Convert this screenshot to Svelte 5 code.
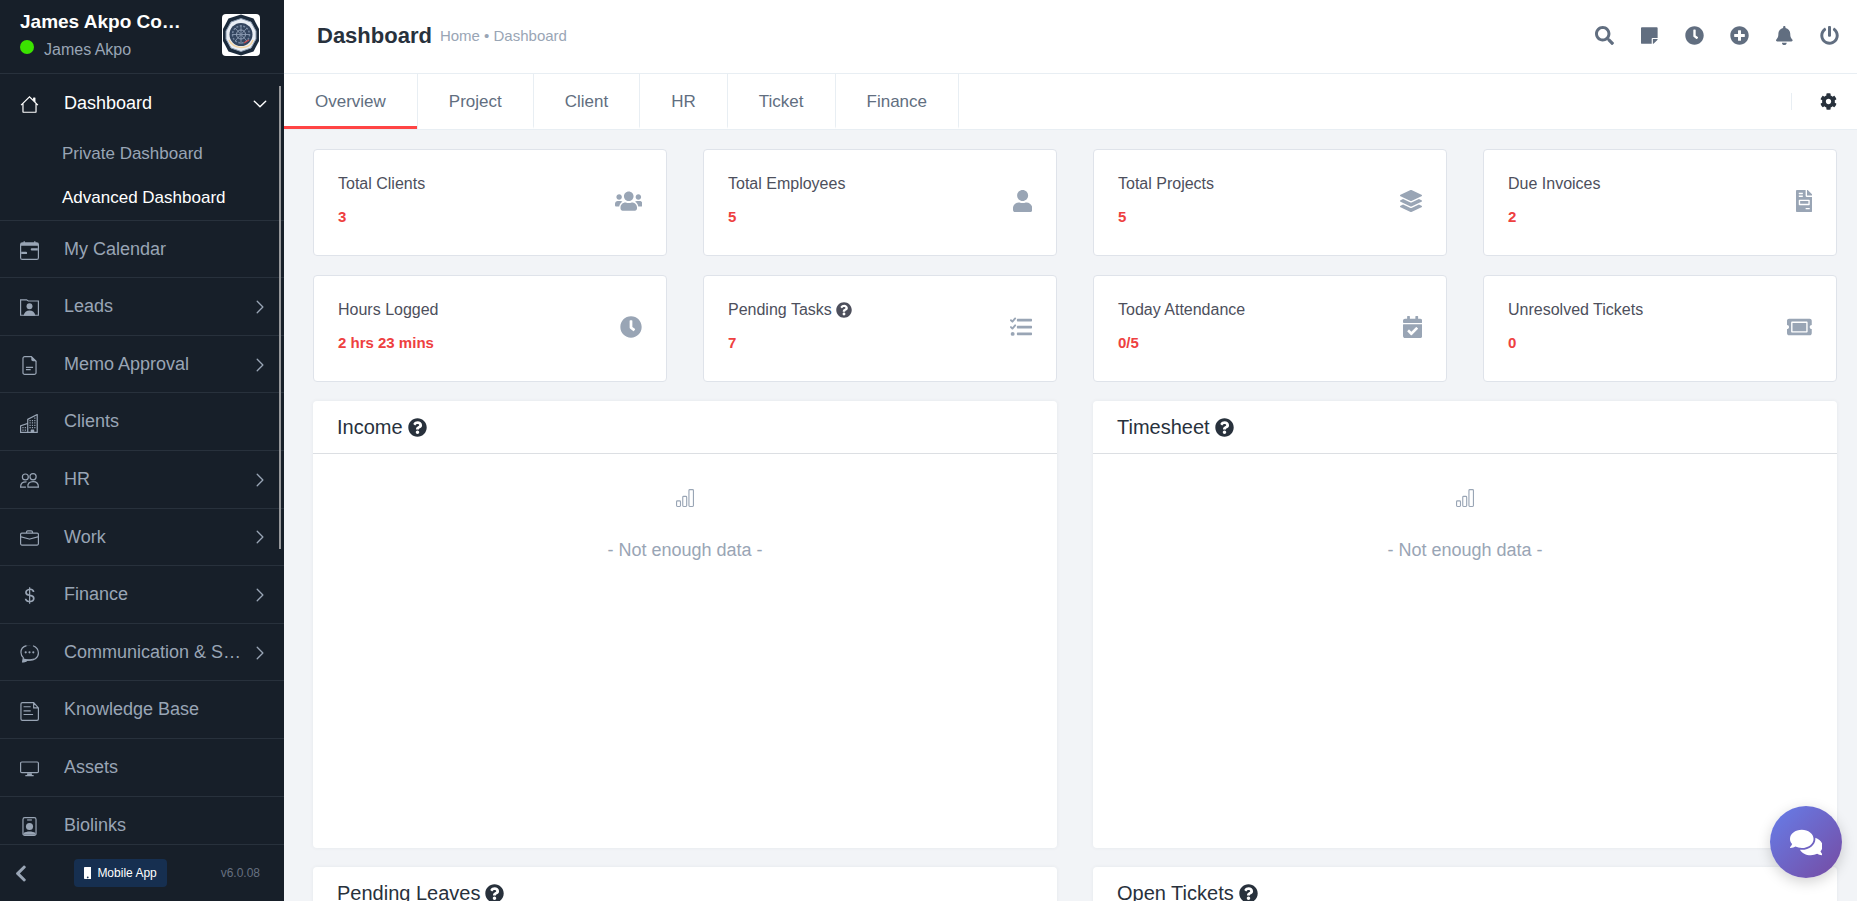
<script>
  const icons = {
    house: { box: '0 0 16 16', body: '<path fill="none" stroke="currentColor" d="M2.5 7v7a.5.5 0 0 0 .5.5h10a.5.5 0 0 0 .5-.5V7M.9 8.5L8 1.5l7.1 7"/><path d="M13 2.500V6l-2-2V2.500a.5.5 0 0 1 .5-.5h1a.5.5 0 0 1 .5.5z"/>' },
    calendar: { box: '0 0 16 16', body: '<path d="M9 7a1 1 0 0 1 1-1h5v2h-5a1 1 0 0 1-1-1zM1 9h4a1 1 0 0 1 0 2H1V9z"/><path d="M3.5 0a.5.5 0 0 1 .5.5V1h8V.5a.5.5 0 0 1 1 0V1h1a2 2 0 0 1 2 2v11a2 2 0 0 1-2 2H2a2 2 0 0 1-2-2V3a2 2 0 0 1 2-2h1V.5a.5.5 0 0 1 .5-.5zM1 4v10a1 1 0 0 0 1 1h12a1 1 0 0 0 1-1V4H1z"/>' },
    leads: { box: '0 0 16 16', body: '<path fill="none" stroke="currentColor" d="M.5 14.500v-13h5L7 2.500h8.500v12z"/><circle cx="8" cy="7" r="2.500"/><path d="M3 15c.5-3 2.500-4.500 5-4.500s4.500 1.500 5 4.500z"/>' },
    memo: { box: '0 0 16 16', body: '<path fill="none" stroke="currentColor" d="M9.500.5H4A1.500 1.500 0 0 0 2.500 2v12A1.500 1.500 0 0 0 4 15.500h8a1.500 1.500 0 0 0 1.500-1.500V4.500zM5 9.500h6M5 11.500h4"/><path d="M9.500 0v3A1.500 1.500 0 0 0 11 4.500h3z"/>' },
    buildings: { box: '0 0 16 16', body: '<path d="M14.763.075A.5.5 0 0 1 15 .5v15a.5.5 0 0 1-.5.5h-14a.5.5 0 0 1-.5-.5V10a.5.5 0 0 1 .342-.474L6 7.640V4.500a.5.5 0 0 1 .276-.447l8-4a.5.5 0 0 1 .487.022zM6 8.694 1 10.360V15h5V8.694zM7 15h2v-1.500a.5.5 0 0 1 .5-.5h2a.5.5 0 0 1 .5.5V15h2V1.309l-7 3.500V15z"/><path d="M2 11h1v1H2v-1zm2 0h1v1H4v-1zm-2 2h1v1H2v-1zm2 0h1v1H4v-1zm4-4h1v1H8V9zm2 0h1v1h-1V9zm-2 2h1v1H8v-1zm2 0h1v1h-1v-1zm2-2h1v1h-1V9zm0 2h1v1h-1v-1zM8 7h1v1H8V7zm2 0h1v1h-1V7zm2 0h1v1h-1V7zM8 5h1v1H8V5zm2 0h1v1h-1V5zm2 0h1v1h-1V5zm0-2h1v1h-1V3z"/>' },
    people: { box: '0 0 16 16', body: '<g fill="none" stroke="currentColor"><circle cx="4.500" cy="5" r="2.500"/><circle cx="11" cy="4.800" r="2.600"/><path d="M6.700 13.500c-.6-3 1.300-4.500 4.300-4.500s4.500 1.500 4.500 4.500zM5 13.500H.5C.5 10.500 2 9 5.500 9.100"/></g>' },
    briefcase: { box: '0 0 16 16', body: '<path d="M6.500 1A1.500 1.500 0 0 0 5 2.500V3H1.500A1.500 1.500 0 0 0 0 4.500v8A1.500 1.500 0 0 0 1.500 14h13a1.500 1.500 0 0 0 1.500-1.500v-8A1.500 1.500 0 0 0 14.500 3H11v-.5A1.500 1.500 0 0 0 9.500 1h-3zm0 1h3a.5.5 0 0 1 .5.5V3H6v-.5a.5.5 0 0 1 .5-.5zm1.886 6.914L15 7.151V12.500a.5.5 0 0 1-.5.5h-13a.5.5 0 0 1-.5-.5V7.150l6.614 1.764a1.500 1.500 0 0 0 .772 0zM1.500 4h13a.5.5 0 0 1 .5.5v1.616L8.129 7.948a.5.5 0 0 1-.258 0L1 6.116V4.500a.5.5 0 0 1 .5-.5z"/>' },
    dollar: { box: '0 0 16 16', body: '<path d="M4 10.781c.148 1.667 1.513 2.850 3.591 3.003V15h1.043v-1.216c2.270-.179 3.678-1.438 3.678-3.300 0-1.590-.947-2.510-2.956-3.028l-.722-.187V3.467c1.122.110 1.879.714 2.070 1.616h1.470c-.166-1.600-1.540-2.748-3.540-2.875V1H7.591v1.233c-1.939.230-3.270 1.472-3.270 3.156 0 1.454.966 2.483 2.661 2.917l.610.162v4.031c-1.149-.170-1.940-.800-2.131-1.718H4zm3.391-3.836c-1.043-.263-1.600-.825-1.600-1.616 0-.944.704-1.641 1.800-1.828v3.495l-.200-.050zm1.591 1.872c1.287.323 1.852.859 1.852 1.769 0 1.097-.826 1.828-2.200 1.939V8.730l.348.086z"/>' },
    chat: { box: '0 0 16 16', body: '<path fill="none" stroke="currentColor" d="M5.500 1.400C2.500 2.200.8 4.200.8 7c0 1.900.8 3.500 2 4.500L2.200 15c2 0 3.200-.9 4-1.500 5.500.9 9.300-2 9.300-6 0-3-2-5-4.500-6"/><path d="M2.200 15.300l.6-3.600c2.500 1.700 6.500 1.500 9 .3-1.500 1.800-3.800 2.200-5.500 2-1.200 1-2.500 1.400-4.100 1.300zM5.500 1.900C7 .8 9.500.8 11 1.300 9 .9 7.500 1.200 5.500 1.900z"/><circle cx="4.800" cy="7" r=".9"/><circle cx="8" cy="7" r=".9"/><circle cx="11.200" cy="7" r=".9"/>' },
    book: { box: '0 0 16 16', body: '<path fill="none" stroke="currentColor" d="M11.500.5H2A1.200 1.200 0 0 0 .8 1.700v12.600A1.200 1.200 0 0 0 2 15.500h12.300a1.200 1.200 0 0 0 1.200-1.200V5zM11.500.5V5h4M3 4h6M3 7.500h6M3 10.500h8"/>' },
    monitor: { box: '0 0 16 16', body: '<path fill="none" stroke="currentColor" d="M1.500 2.500h13a1 1 0 0 1 1 1v7a1 1 0 0 1-1 1h-13a1 1 0 0 1-1-1v-7a1 1 0 0 1 1-1z"/><path d="M6 12h4v1.500h1.500v1h-7v-1H6z"/>' },
    badge: { box: '0 0 16 16', body: '<path fill="none" stroke="currentColor" d="M4 .5h8A1.500 1.500 0 0 1 13.500 2v12a1.500 1.500 0 0 1-1.500 1.500H4A1.500 1.500 0 0 1 2.500 14V2A1.500 1.500 0 0 1 4 .5z"/><path d="M6 2h4v1H6z"/><circle cx="8" cy="8" r="3"/><path d="M3 15v-1.500c2.500-1.700 7.500-1.700 10 0V15z"/>' },
    down: { box: '0 0 16 16', body: '<path fill="none" stroke="currentColor" stroke-width="1.600" stroke-linecap="round" stroke-linejoin="round" d="M1.500 4.800l6.500 6.400 6.500-6.400"/>' },
    right: { box: '0 0 16 16', body: '<path fill="none" stroke="currentColor" stroke-width="1.500" stroke-linecap="round" stroke-linejoin="round" d="M4.800 1.500l6.500 6.500-6.500 6.500"/>' },
    left: { box: '0 0 320 512', body: '<path d="M34.520 239.030L228.870 44.690c9.370-9.370 24.570-9.370 33.940 0l22.670 22.670c9.360 9.360 9.370 24.520.040 33.900L131.490 256l154.020 154.750c9.340 9.380 9.320 24.540-.040 33.900l-22.670 22.670c-9.370 9.370-24.570 9.370-33.940 0L34.520 272.970c-9.370-9.370-9.370-24.570 0-33.940z"/>' },
    mobile: { box: '0 0 320 512', body: '<path fill-rule="evenodd" d="M32 0h256a32 32 0 0 1 32 32v448a32 32 0 0 1-32 32H32a32 32 0 0 1-32-32V32A32 32 0 0 1 32 0zm128 410a34 34 0 1 0 .1 0z"/>' },
    search: { box: '0 0 512 512', body: '<path d="M505 442.700L405.300 343c-4.500-4.500-10.600-7-17-7H372c27.600-35.300 44-79.700 44-128C416 93.100 322.900 0 208 0S0 93.100 0 208s93.100 208 208 208c48.300 0 92.700-16.400 128-44v16.300c0 6.400 2.500 12.500 7 17l99.700 99.700c9.400 9.400 24.600 9.400 33.900 0l28.300-28.300c9.400-9.400 9.400-24.600.1-34zM208 336c-70.700 0-128-57.200-128-128 0-70.700 57.200-128 128-128 70.700 0 128 57.200 128 128 0 70.700-57.200 128-128 128z"/>' },
    note: { box: '0 0 448 512', body: '<path d="M312 320h136V56c0-13.300-10.700-24-24-24H24C10.700 32 0 42.700 0 56v400c0 13.300 10.700 24 24 24h264V344c0-13.200 10.800-24 24-24zm129 55l-98 98c-4.500 4.500-10.600 7-17 7h-6V352h128v6.100c0 6.300-2.500 12.400-7 16.900z"/>' },
    clock: { box: '0 0 512 512', body: '<path d="M256,8C119,8,8,119,8,256S119,504,256,504,504,393,504,256,393,8,256,8Zm92.490,313h0l-20,25a16,16,0,0,1-22.490,2.500h0l-67-49.720a40,40,0,0,1-15-31.230V112a16,16,0,0,1,16-16h32a16,16,0,0,1,16,16V256l58,42.500A16,16,0,0,1,348.490,321Z"/>' },
    plus: { box: '0 0 512 512', body: '<path d="M256 8C119 8 8 119 8 256s111 248 248 248 248-111 248-248S393 8 256 8zm144 276c0 6.600-5.400 12-12 12h-92v92c0 6.600-5.400 12-12 12h-56c-6.600 0-12-5.400-12-12v-92h-92c-6.600 0-12-5.400-12-12v-56c0-6.600 5.400-12 12-12h92v-92c0-6.600 5.400-12 12-12h56c6.600 0 12 5.400 12 12v92h92c6.600 0 12 5.400 12 12v56z"/>' },
    bell: { box: '0 0 448 512', body: '<path d="M224 512c35.320 0 63.970-28.650 63.970-64H160.030c0 35.350 28.650 64 63.970 64zm215.390-149.710c-19.320-20.760-55.470-51.990-55.470-154.290 0-77.700-54.480-139.900-127.940-155.160V32c0-17.670-14.320-32-31.980-32s-31.980 14.330-31.980 32v20.840C118.560 68.100 64.080 130.300 64.080 208c0 102.300-36.150 133.530-55.470 154.290-6 6.450-8.660 14.160-8.610 21.710.110 16.400 12.980 32 32.100 32h383.800c19.120 0 32-15.600 32.100-32 .050-7.550-2.610-15.270-8.610-21.710z"/>' },
    power: { box: '0 0 512 512', body: '<path d="M400 54.100c63 45 104 118.600 104 201.900 0 136.800-110.800 247.700-247.500 248C120 504.300 8.200 393 8 256.400 7.900 173.100 48.900 99.300 111.800 54.200c11.700-8.300 28-4.800 35 7.700L162.600 90c5.900 10.500 3.100 23.800-6.600 31-41.500 30.800-68 79.600-68 134.900-.1 92.300 74.500 168.100 168 168.100 91.600 0 168.600-74.200 168-169.100-.3-51.800-24.700-101.800-68.100-134-9.700-7.200-12.400-20.500-6.500-30.900l15.800-28.100c7-12.400 23.200-16.100 34.800-7.800zM296 264V24c0-13.300-10.700-24-24-24h-32c-13.300 0-24 10.700-24 24v240c0 13.300 10.700 24 24 24h32c13.300 0 24-10.700 24-24z"/>' },
    cog: { box: '0 0 512 512', body: '<path d="M487.400 315.700l-42.600-24.600c4.300-23.200 4.300-47 0-70.200l42.600-24.600c4.900-2.800 7.100-8.600 5.500-14-11.100-35.600-30-67.800-54.700-94.600-3.800-4.100-10-5.100-14.800-2.300L380.800 110c-17.900-15.400-38.500-27.300-60.800-35.100V25.800c0-5.600-3.900-10.500-9.400-11.700-36.700-8.200-74.300-7.800-109.200 0-5.500 1.200-9.400 6.100-9.400 11.700V75c-22.200 7.900-42.800 19.800-60.800 35.100L88.700 85.500c-4.900-2.800-11-1.900-14.800 2.300-24.700 26.700-43.600 58.900-54.700 94.600-1.700 5.400.6 11.200 5.500 14L67.300 221c-4.300 23.200-4.300 47 0 70.200l-42.600 24.600c-4.900 2.800-7.100 8.600-5.500 14 11.100 35.600 30 67.800 54.700 94.600 3.800 4.100 10 5.100 14.800 2.300l42.600-24.600c17.900 15.400 38.500 27.300 60.800 35.100v49.200c0 5.600 3.900 10.500 9.400 11.700 36.700 8.200 74.300 7.800 109.200 0 5.500-1.200 9.400-6.100 9.400-11.700v-49.200c22.200-7.900 42.800-19.800 60.800-35.100l42.600 24.600c4.900 2.800 11 1.900 14.800-2.300 24.700-26.700 43.600-58.900 54.700-94.600 1.500-5.500-.7-11.300-5.600-14.100zM256 336c-44.100 0-80-35.900-80-80s35.900-80 80-80 80 35.900 80 80-35.900 80-80 80z"/>' },
    users: { box: '0 0 640 512', body: '<path d="M96 224c35.300 0 64-28.700 64-64s-28.700-64-64-64-64 28.700-64 64 28.700 64 64 64zm448 0c35.300 0 64-28.700 64-64s-28.700-64-64-64-64 28.700-64 64 28.700 64 64 64zm32 32h-64c-17.600 0-33.500 7.100-45.100 18.600 40.300 22.100 68.900 62 75.100 109.400h66c17.700 0 32-14.300 32-32v-32c0-35.300-28.700-64-64-64zm-256 0c61.900 0 112-50.100 112-112S381.900 32 320 32 208 82.100 208 144s50.100 112 112 112zm76.800 32h-8.300c-20.800 10-43.900 16-68.500 16s-47.600-6-68.500-16h-8.300C179.600 288 128 339.600 128 403.200V432c0 26.500 21.500 48 48 48h288c26.500 0 48-21.500 48-48v-28.800c0-63.600-51.600-115.200-115.200-115.200zm-223.700-13.400C161.500 263.100 145.600 256 128 256H64c-35.300 0-64 28.700-64 64v32c0 17.700 14.300 32 32 32h65.900c6.300-47.400 34.900-87.300 75.200-109.400z"/>' },
    user: { box: '0 0 448 512', body: '<path d="M224 256c70.700 0 128-57.300 128-128S294.700 0 224 0 96 57.300 96 128s57.300 128 128 128zm89.600 32h-16.700c-22.200 10.200-46.900 16-72.900 16s-50.600-5.800-72.900-16h-16.700C60.200 288 0 348.200 0 422.400V464c0 26.500 21.500 48 48 48h352c26.500 0 48-21.500 48-48v-41.600c0-74.200-60.200-134.400-134.400-134.400z"/>' },
    layers: { box: '0 0 512 512', body: '<path d="M12.410 148.020l232.940 105.670c6.800 3.090 14.490 3.090 21.290 0l232.940-105.670c16.550-7.510 16.550-32.520 0-40.030L266.650 2.310a25.607 25.607 0 0 0-21.290 0L12.410 107.980c-16.550 7.510-16.550 32.530 0 40.040zm487.180 88.280l-58.090-26.330-161.640 73.270c-7.560 3.430-15.590 5.170-23.860 5.170s-16.290-1.740-23.860-5.170L70.510 209.970l-58.100 26.330c-16.550 7.500-16.550 32.500 0 40l232.940 105.590c6.800 3.080 14.490 3.080 21.290 0L499.590 276.300c16.550-7.500 16.550-32.500 0-40zm0 127.800l-57.870-26.230-161.860 73.370c-7.560 3.430-15.590 5.170-23.860 5.170s-16.290-1.740-23.860-5.170L70.290 337.870 12.410 364.100c-16.550 7.500-16.550 32.500 0 40l232.940 105.590c6.800 3.080 14.490 3.080 21.290 0L499.590 404.100c16.550-7.500 16.550-32.500 0-40z"/>' },
    invoice: { box: '0 0 384 512', body: '<path d="M288 256H96v64h192v-64zm89-151L279.100 7c-4.500-4.500-10.600-7-17-7H256v128h128v-6.100c0-6.300-2.500-12.400-7-16.900zm-153 31V0H24C10.700 0 0 10.700 0 24v464c0 13.300 10.700 24 24 24h336c13.300 0 24-10.700 24-24V160H248c-13.200 0-24-10.800-24-24zM64 72c0-4.420 3.580-8 8-8h80c4.420 0 8 3.580 8 8v16c0 4.420-3.580 8-8 8H72c-4.420 0-8-3.580-8-8V72zm0 64c0-4.420 3.580-8 8-8h80c4.420 0 8 3.580 8 8v16c0 4.420-3.580 8-8 8H72c-4.420 0-8-3.580-8-8v-16zm256 304c0 4.420-3.580 8-8 8h-80c-4.420 0-8-3.580-8-8v-16c0-4.420 3.580-8 8-8h80c4.420 0 8 3.580 8 8v16zm0-200v96c0 8.840-7.160 16-16 16H80c-8.840 0-16-7.160-16-16v-96c0-8.840 7.160-16 16-16h224c8.840 0 16 7.160 16 16z"/>' },
    tasks: { box: '0 0 512 512', body: '<path d="M176 64h320a16 16 0 0 1 16 16v32a16 16 0 0 1-16 16H176a16 16 0 0 1-16-16V80a16 16 0 0 1 16-16zm0 160h320a16 16 0 0 1 16 16v32a16 16 0 0 1-16 16H176a16 16 0 0 1-16-16v-32a16 16 0 0 1 16-16zm0 160h320a16 16 0 0 1 16 16v32a16 16 0 0 1-16 16H176a16 16 0 0 1-16-16v-32a16 16 0 0 1 16-16z"/><circle cx="62" cy="416" r="46"/><path fill="none" stroke="currentColor" stroke-width="44" stroke-linecap="round" stroke-linejoin="round" d="M22 98l34 34 64-74M22 258l34 34 64-74"/>' },
    check: { box: '0 0 448 512', body: '<path d="M436 160H12c-6.627 0-12-5.373-12-12v-36c0-26.510 21.490-48 48-48h48V12c0-6.627 5.373-12 12-12h40c6.627 0 12 5.373 12 12v52h128V12c0-6.627 5.373-12 12-12h40c6.627 0 12 5.373 12 12v52h48c26.510 0 48 21.490 48 48v36c0 6.627-5.373 12-12 12zM12 192h424c6.627 0 12 5.373 12 12v260c0 26.510-21.490 48-48 48H48c-26.510 0-48-21.490-48-48V204c0-6.627 5.373-12 12-12zm333.296 95.947l-28.169-28.398c-4.667-4.705-12.265-4.736-16.970-.068L194.120 364.665l-45.980-46.352c-4.667-4.705-12.266-4.736-16.971-.068l-28.397 28.170c-4.705 4.667-4.736 12.265-.068 16.970l82.601 83.269c4.667 4.705 12.265 4.736 16.970.068l142.953-141.805c4.705-4.667 4.736-12.265.068-16.970z"/>' },
    ticket: { box: '0 0 576 512', body: '<path d="M128 160h320v192H128V160zm400 96c0 26.510 21.490 48 48 48v96c0 26.510-21.490 48-48 48H48c-26.510 0-48-21.490-48-48v-96c26.510 0 48-21.490 48-48s-21.490-48-48-48v-96c0-26.510 21.490-48 48-48h480c26.510 0 48 21.490 48 48v96c-26.510 0-48 21.490-48 48zm-48-104c0-13.255-10.745-24-24-24H120c-13.255 0-24 10.745-24 24v208c0 13.255 10.745 24 24 24h336c13.255 0 24-10.745 24-24V152z"/>' },
    help: { box: '0 0 512 512', body: '<path d="M504 256c0 136.997-111.043 248-248 248S8 392.997 8 256C8 119.083 119.043 8 256 8s248 111.083 248 248zM262.655 90c-54.497 0-89.255 22.957-116.549 63.758-3.536 5.286-2.353 12.415 2.715 16.258l34.699 26.310c5.205 3.947 12.621 3.008 16.665-2.122 17.864-22.658 30.113-35.797 57.303-35.797 20.429 0 45.698 13.148 45.698 32.958 0 14.976-12.363 22.667-32.534 33.976C247.128 238.528 216 254.941 216 296v4c0 6.627 5.373 12 12 12h56c6.627 0 12-5.373 12-12v-1.333c0-28.462 83.186-29.647 83.186-106.667 0-58.002-60.165-102-116.531-102zM256 338c-25.365 0-46 20.635-46 46 0 25.364 20.635 46 46 46s46-20.636 46-46c0-25.365-20.635-46-46-46z"/>' },
    bars: { box: '0 0 16 16', body: '<g fill="none" stroke="currentColor"><rect x="0.500" y="10.500" width="3.500" height="5" rx="0.800"/><rect x="6" y="6.500" width="3.500" height="9" rx="0.800"/><rect x="11.500" y="0.500" width="4" height="15" rx="0.800"/></g>' },
    comments: { box: '0 0 576 512', body: '<path d="M416 192c0-88.400-93.100-160-208-160S0 103.600 0 192c0 34.300 14.100 65.900 38 92-13.400 30.200-35.500 54.200-35.800 54.500-2.200 2.300-2.800 5.700-1.500 8.700S4.800 352 8 352c36.600 0 66.900-12.300 88.700-25 32.200 15.700 70.300 25 111.300 25 114.900 0 208-71.600 208-160zm122 220c23.900-26 38-57.700 38-92 0-66.900-53.500-124.200-129.300-148.100.9 6.600 1.300 13.300 1.300 20.100 0 105.900-107.700 192-240 192-10.800 0-21.300-.8-31.700-1.900C207.800 439.600 281.800 480 368 480c41 0 79.100-9.200 111.300-25 21.800 12.700 52.100 25 88.700 25 3.200 0 6.100-1.900 7.300-4.800 1.300-2.900.7-6.300-1.500-8.700-.3-.3-22.400-24.200-35.800-54.500z"/>' },
  };

  const menu = [
    { label: 'My Calendar', icon: 'calendar' },
    { label: 'Leads', icon: 'leads', more: true },
    { label: 'Memo Approval', icon: 'memo', more: true },
    { label: 'Clients', icon: 'buildings' },
    { label: 'HR', icon: 'people', more: true },
    { label: 'Work', icon: 'briefcase', more: true },
    { label: 'Finance', icon: 'dollar', more: true },
    { label: 'Communication & S…', icon: 'chat', more: true },
    { label: 'Knowledge Base', icon: 'book' },
    { label: 'Assets', icon: 'monitor' },
    { label: 'Biolinks', icon: 'badge' },
  ];

  const actions = [
    { icon: 'search', label: 'Search' },
    { icon: 'note', label: 'Sticky notes' },
    { icon: 'clock', label: 'Timer' },
    { icon: 'plus', label: 'Create new' },
    { icon: 'bell', label: 'Notifications' },
    { icon: 'power', label: 'Log out' },
  ];

  const tabs = ['Overview', 'Project', 'Client', 'HR', 'Ticket', 'Finance'];
  let active = $state('Overview');

  const stats = [
    { label: 'Total Clients', value: '3', icon: 'users' },
    { label: 'Total Employees', value: '5', icon: 'user' },
    { label: 'Total Projects', value: '5', icon: 'layers' },
    { label: 'Due Invoices', value: '2', icon: 'invoice' },
    { label: 'Hours Logged', value: '2 hrs 23 mins', icon: 'clock' },
    { label: 'Pending Tasks', value: '7', icon: 'tasks', help: true },
    { label: 'Today Attendance', value: '0/5', icon: 'check' },
    { label: 'Unresolved Tickets', value: '0', icon: 'ticket' },
  ];

  const panels = [
    { title: 'Income', empty: '- Not enough data -' },
    { title: 'Timesheet', empty: '- Not enough data -' },
    { title: 'Pending Leaves' },
    { title: 'Open Tickets' },
  ];
</script>

{#snippet icon(name)}
  <svg viewBox={icons[name].box} fill="currentColor" aria-hidden="true">{@html icons[name].body}</svg>
{/snippet}

<div class="app">
  <aside class="sidebar">
    <div class="brand">
      <div class="who">
        <strong>James Akpo Co…</strong>
        <span class="person"><i class="online"></i>James Akpo</span>
      </div>
      <svg class="logo" viewBox="0 0 38 42" aria-hidden="true">
        <rect width="38" height="42" rx="4" fill="#fff" />
        <path d="M19 .5l12.500 4L37 15v12l-5.500 10.500L19 41.500 6.500 37.500 1 27V15L6.500 4.500z" fill="#1b2a3b" />
        <path d="M19 4.500l10 3.500 5 9v8l-5 9-10 3.500L9 34l-5-9v-8l5-9z" fill="#e9eef5" stroke="#8b9bb0" stroke-width="1" />
        <path d="M7 26c3 9 21 11 24 0" fill="none" stroke="#f3d3a0" stroke-width="1.500" />
        <circle cx="19" cy="20.500" r="11.500" fill="#33455f" />
        <circle cx="19" cy="20.500" r="8.500" fill="none" stroke="#74869f" stroke-width="1.500" stroke-dasharray="2 1.500" />
        <path d="M19 11v19M10 20.500h18M13 14l12 13M25 14L13 27" stroke="#8292aa" stroke-width="1" />
        <circle cx="19" cy="20.500" r="4.500" fill="none" stroke="#95a4ba" stroke-width="1" />
        <path d="M22 29l5-3" stroke="#c9474b" stroke-width="1.200" />
      </svg>
    </div>

    <nav class="menu" aria-label="Main">
      <ul>
        <li>
          <a class="entry open" href="#dashboard">
            {@render icon('house')}<span>Dashboard</span><em>{@render icon('down')}</em>
          </a>
          <div class="sub">
            <a href="#private">Private Dashboard</a>
            <a class="current" href="#advanced">Advanced Dashboard</a>
          </div>
        </li>
        {#each menu as item}
          <li>
            <a class="entry" href="#{item.icon}">
              {@render icon(item.icon)}<span>{item.label}</span>
              {#if item.more}<em>{@render icon('right')}</em>{/if}
            </a>
          </li>
        {/each}
      </ul>
      <div class="thumb"></div>
    </nav>

    <div class="foot">
      <button class="collapse" aria-label="Collapse sidebar">{@render icon('left')}</button>
      <button class="mobile">{@render icon('mobile')}Mobile App</button>
      <span>v6.0.08</span>
    </div>
  </aside>

  <div class="main">
    <header class="top">
      <h1>Dashboard</h1>
      <div class="crumbs"><a href="#home">Home</a> • Dashboard</div>
      <div class="actions">
        {#each actions as a}
          <button aria-label={a.label}>{@render icon(a.icon)}</button>
        {/each}
      </div>
    </header>

    <div class="tabs">
      {#each tabs as tab}
        <button class:active={active === tab} onclick={() => (active = tab)}>{tab}</button>
      {/each}
      <button class="gear" aria-label="Dashboard settings">{@render icon('cog')}</button>
    </div>

    <main class="content">
      <section class="stats">
        {#each stats as s}
          <article class="card">
            <div>
              <h2>{s.label}{#if s.help}{@render icon('help')}{/if}</h2>
              <p>{s.value}</p>
            </div>
            {@render icon(s.icon)}
          </article>
        {/each}
      </section>
      <section class="panels">
        {#each panels as panel}
          <article class="panel">
            <h2>{panel.title}{@render icon('help')}</h2>
            <div class="empty">
              {#if panel.empty}{@render icon('bars')}<p>{panel.empty}</p>{/if}
            </div>
          </article>
        {/each}
      </section>
    </main>
  </div>

  <button class="talk" aria-label="Open chat">{@render icon('comments')}</button>
</div>

<style>
  :global(body) {
    margin: 0;
    overflow: hidden;
  }
  .app {
    display: flex;
    height: 100vh;
    background: #f2f4f7;
    font-family: 'Liberation Sans', Arial, sans-serif;
    font-size: 16px;
  }
  h1, h2, p, ul { margin: 0; padding: 0; }
  ul { list-style: none; }
  a { color: inherit; text-decoration: none; }
  button {
    padding: 0;
    border: 0;
    background: none;
    color: inherit;
    font: inherit;
    cursor: pointer;
  }
  svg { display: block; flex: none; }

  .sidebar {
    display: flex;
    flex-direction: column;
    flex: none;
    width: 284px;
    background: #171f29;
    color: #99a5b5;
  }
  .brand {
    display: flex;
    justify-content: space-between;
    align-items: flex-start;
    box-sizing: border-box;
    height: 74px;
    padding: 10px 24px 0 20px;
    border-bottom: 1px solid #28313c;
  }
  .who {
    display: flex;
    flex-direction: column;
    gap: 6px;
  }
  .who strong {
    color: #fff;
    font-size: 19px;
    line-height: 24px;
  }
  .person {
    display: flex;
    gap: 10px;
    line-height: 20px;
  }
  .online {
    width: 14px;
    height: 14px;
    border-radius: 50%;
    background: #3be300;
  }
  .logo {
    width: 38px;
    height: 42px;
    margin-top: 4px;
  }
  .menu {
    position: relative;
    flex: 1;
    min-height: 0;
  }
  .menu ul {
    box-sizing: border-box;
    height: 100%;
    padding-top: 1px;
    overflow-y: auto;
    scrollbar-width: none;
  }
  .menu li { border-bottom: 1px solid #28313c; }
  .entry {
    display: flex;
    align-items: center;
    padding: 18px 17px 17px 20px;
    font-size: 18px;
    line-height: 1.2;
  }
  .entry > :global(svg) {
    width: 19px;
    height: 19px;
    margin: 2px 25px 0 0;
  }
  .entry span {
    flex: 1;
    white-space: nowrap;
  }
  .entry em :global(svg) {
    width: 14px;
    height: 14px;
  }
  .open,
  .current { color: #fff; }
  .sub {
    display: flex;
    flex-direction: column;
    padding-left: 62px;
    font-size: 17px;
    line-height: 44px;
  }
  .thumb {
    position: absolute;
    top: 12px;
    right: 3px;
    width: 2px;
    height: 463px;
    background: #96979a;
  }
  .foot {
    display: flex;
    align-items: center;
    height: 56px;
    padding: 0 24px 0 15px;
    border-top: 1px solid #28313c;
    color: #667080;
    font-size: 12px;
  }
  .foot span { margin-left: auto; }
  .collapse {
    margin-right: 47px;
    color: #99a5b5;
  }
  .collapse :global(svg) { height: 19px; }
  .mobile {
    display: flex;
    align-items: center;
    gap: 6px;
    height: 28px;
    padding: 0 10px;
    border-radius: 4px;
    background: #162f50;
    color: #fff;
  }
  .mobile :global(svg) { height: 12px; }

  .main {
    flex: 1;
    min-width: 0;
    overflow-y: auto;
    scrollbar-width: none;
  }
  .top {
    display: flex;
    align-items: center;
    box-sizing: border-box;
    height: 74px;
    padding: 0 18px 2px 33px;
    border-bottom: 1px solid #e8eef3;
    background: #fff;
  }
  h1 {
    color: #28313c;
    font-size: 22px;
  }
  .crumbs {
    margin-left: 8px;
    color: #99a5b5;
    font-size: 15px;
  }
  .actions {
    display: flex;
    gap: 26px;
    margin-left: auto;
    color: #616e80;
  }
  .actions button {
    display: flex;
    justify-content: center;
    width: 19px;
  }
  .actions :global(svg) { height: 19px; }
  .tabs {
    display: flex;
    height: 55px;
    border-bottom: 1px solid #e8eef3;
    background: #fff;
    color: #616e80;
    font-size: 17px;
  }
  .tabs button {
    padding: 3px 31px 0;
    border-right: 1px solid #e8eef3;
    border-bottom: 3px solid transparent;
  }
  .tabs .active { box-shadow: inset 0 -3px #f44; border-bottom: 0; padding-bottom: 3px; }
  .tabs .gear {
    align-self: center;
    margin-left: auto;
    padding: 0 20px 0 28px;
    border: 0;
    border-left: 1px solid #e8eef3;
    color: #28313c;
  }
  .gear :global(svg) { height: 17px; }

  .content {
    display: flex;
    flex-direction: column;
    gap: 19px;
    padding: 19px 20px 19px 29px;
  }
  .stats {
    display: grid;
    grid-template-columns: repeat(4, 1fr);
    gap: 19px 36px;
  }
  .card {
    display: flex;
    align-items: center;
    justify-content: space-between;
    padding: 24px 24px 28px;
    border: 1px solid #dfe3ea;
    border-radius: 4px;
    background: #fff;
    color: #99a5b5;
  }
  .card > :global(svg) { height: 22px; }
  .card h2 {
    display: flex;
    align-items: center;
    gap: 4px;
    margin-bottom: 13px;
    color: #4d4f5c;
    font-size: 16px;
    font-weight: 400;
    line-height: 20px;
  }
  .card h2 :global(svg) { height: 16px; }
  .card p {
    color: #ee4040;
    font-size: 15px;
    font-weight: 700;
    line-height: 20px;
  }
  .panels {
    display: grid;
    grid-template-columns: repeat(2, 1fr);
    gap: 19px 36px;
  }
  .panel {
    border-radius: 4px;
    background: #fff;
    box-shadow: 0 0 4px rgba(40, 49, 60, 0.06);
  }
  .panel h2 {
    display: flex;
    align-items: center;
    gap: 5px;
    height: 52px;
    padding: 0 24px;
    border-bottom: 1px solid #dcdfe3;
    color: #28313c;
    font-size: 20px;
    font-weight: 400;
  }
  .panel h2 :global(svg) { height: 19px; }
  .empty {
    display: flex;
    flex-direction: column;
    align-items: center;
    gap: 32px;
    box-sizing: border-box;
    min-height: 394px;
    padding-top: 35px;
    color: #99a5b5;
    font-size: 18px;
    line-height: 22px;
  }
  .empty :global(svg) { height: 18px; }
  .talk {
    position: fixed;
    right: 15px;
    bottom: 23px;
    display: grid;
    place-items: center;
    width: 72px;
    height: 72px;
    border-radius: 50%;
    background: linear-gradient(135deg, #667eea, #764ba2);
    box-shadow: 0 4px 14px rgba(0, 0, 0, 0.18);
    color: #fff;
  }
  .talk :global(svg) { height: 29px; }
</style>
